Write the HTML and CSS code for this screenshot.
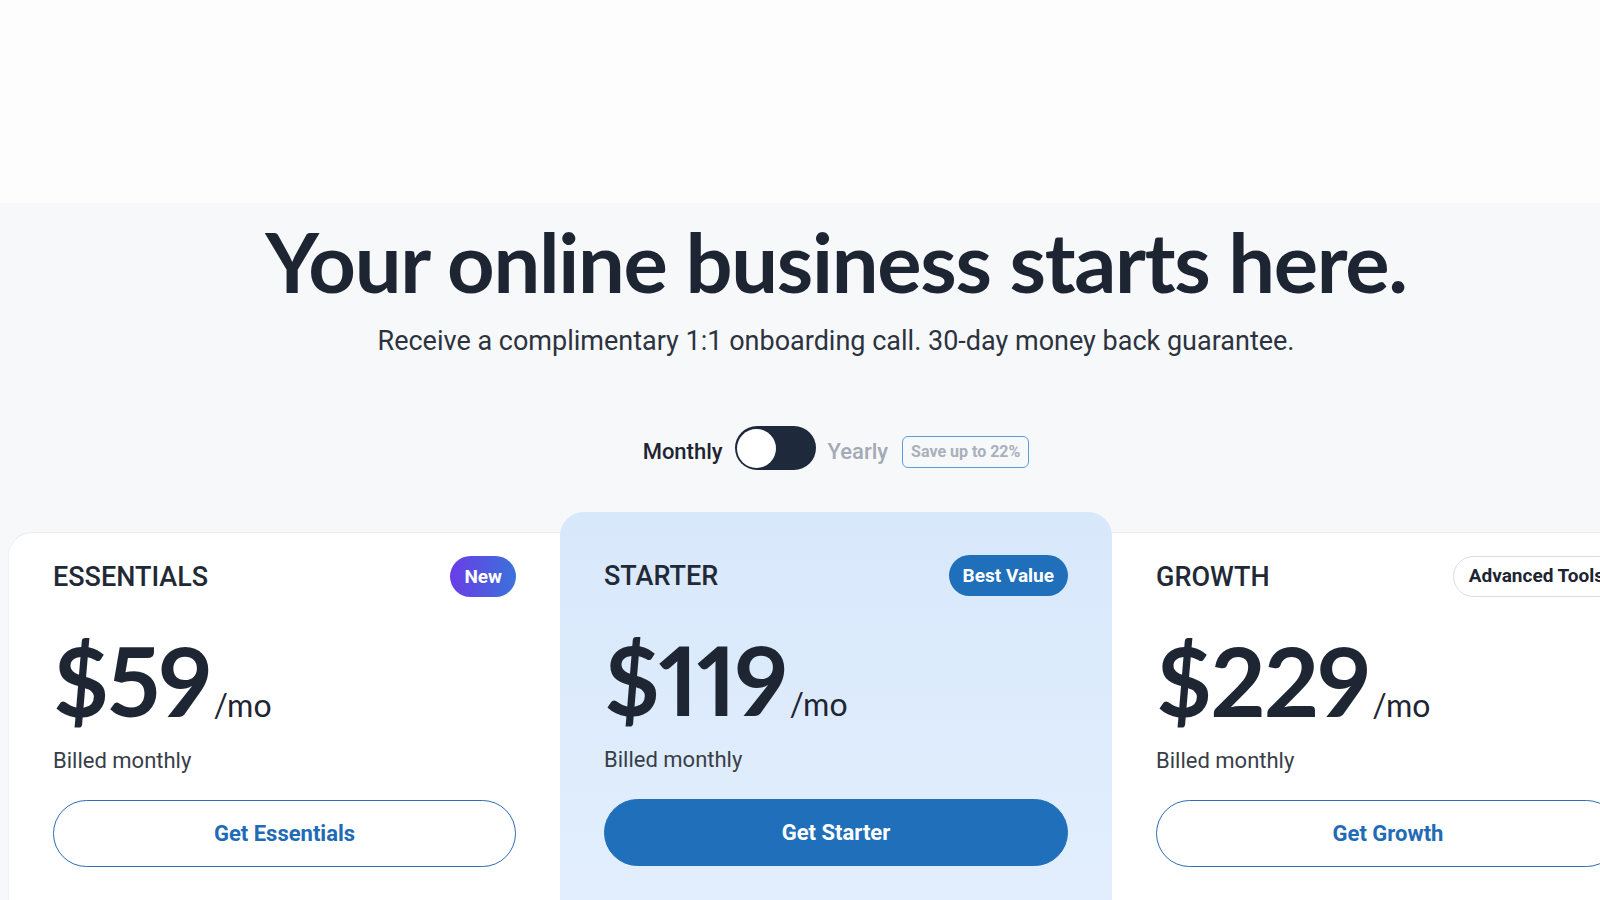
FILE: index.html
```html
<!DOCTYPE html>
<html lang="en">
<head>
<meta charset="utf-8">
<title>Pricing</title>
<link rel="stylesheet" href="styles.css">
</head>
<body>
<div class="page">
  <div class="topband"></div>
  <section class="hero">
    <h1 class="title">Your online business starts here.</h1>
    <p class="subtitle">Receive a complimentary 1:1 onboarding call. 30-day money back guarantee.</p>
    <div class="billing">
      <span class="billing-label billing-label--active">Monthly</span>
      <span class="switch"><span class="knob"></span></span>
      <span class="billing-label">Yearly</span>
      <span class="save">Save up to 22%</span>
    </div>
    <div class="plans">
      <article class="plan plan--first">
        <div class="plan-head">
          <h2 class="plan-name">ESSENTIALS</h2>
          <span class="tag tag--new">New</span>
        </div>
        <div class="price"><span class="amount">$59</span><span class="per">/mo</span></div>
        <p class="billed">Billed monthly</p>
        <a class="cta">Get Essentials</a>
      </article>
      <article class="plan plan--featured">
        <div class="plan-head">
          <h2 class="plan-name">STARTER</h2>
          <span class="tag tag--best">Best Value</span>
        </div>
        <div class="price"><span class="amount">$119</span><span class="per">/mo</span></div>
        <p class="billed">Billed monthly</p>
        <a class="cta cta--solid">Get Starter</a>
      </article>
      <article class="plan plan--last">
        <div class="plan-head">
          <h2 class="plan-name">GROWTH</h2>
          <span class="tag tag--outline">Advanced Tools</span>
        </div>
        <div class="price"><span class="amount">$229</span><span class="per">/mo</span></div>
        <p class="billed">Billed monthly</p>
        <a class="cta">Get Growth</a>
      </article>
    </div>
  </section>
</div>
</body>
</html>
```

FILE: styles.css
```css
html, body {
  margin: 0;
  padding: 0;
  overflow: hidden;
  background: #f7f8fa;
}

.page {
  width: 1672px;
}

.topband {
  height: 203px;
  background: #fdfdfd;
}

.hero {
  background: #f7f8fa;
  padding-top: 8px;
  display: flex;
  flex-direction: column;
  align-items: center;
}

.title {
  margin: 0;
  font-family: "Lato", "Liberation Sans", sans-serif;
  font-weight: 700;
  font-size: 83px;
  line-height: 100px;
  color: #1e2532;
  letter-spacing: -1.3px;
}

.subtitle {
  margin: 15px 0 0;
  font-family: "Roboto", "Liberation Sans", sans-serif;
  font-weight: 400;
  font-size: 27px;
  line-height: 30px;
  color: #2c333f;
}

.billing {
  margin-top: 70px;
  display: flex;
  align-items: center;
  height: 44px;
}

.billing-label {
  font-family: "Roboto", "Liberation Sans", sans-serif;
  font-weight: 500;
  font-size: 22px;
  line-height: 26px;
  color: #a3aab6;
  margin-top: 8px;
}

.billing-label--active {
  color: #1e2532;
  margin-right: 12px;
}

.switch {
  width: 81px;
  height: 44px;
  box-sizing: border-box;
  padding: 2px;
  border-radius: 22px;
  background: #1e293b;
  display: flex;
  align-items: center;
  margin-right: 12px;
}

.knob {
  width: 39px;
  height: 39px;
  border-radius: 50%;
  background: #ffffff;
}

.save {
  margin-left: 14px;
  margin-top: 8px;
  box-sizing: border-box;
  height: 32px;
  padding: 0 8px;
  border: 1.5px solid #5d9cd8;
  border-radius: 6px;
  font-family: "Roboto", "Liberation Sans", sans-serif;
  font-weight: 700;
  font-size: 16px;
  line-height: 29px;
  color: #a9b0bb;
}

.plans {
  margin-top: 42px;
  align-self: stretch;
  display: flex;
  align-items: flex-start;
  padding: 0 8px;
}

.plan {
  flex: none;
  width: 552px;
  box-sizing: border-box;
  margin-top: 20px;
  padding: 23px 44px 80px;
  background: #ffffff;
  border-top: 1px solid #e9edf2;
}

.plan--first {
  border-radius: 24px 0 0 0;
  border-left: 1px solid #eef1f5;
}

.plan--featured {
  margin-top: 0;
  padding-top: 43px;
  border-top: none;
  border-radius: 24px 24px 0 0;
  background: linear-gradient(180deg, #d8e8fb 0%, #e3effd 100%);
  position: relative;
  z-index: 1;
}

.plan--last {
  border-radius: 0 24px 0 0;
}

.plan-head {
  display: flex;
  align-items: center;
  justify-content: space-between;
  height: 41px;
}

.plan-name {
  margin: 0;
  font-family: "Roboto", "Liberation Sans", sans-serif;
  font-weight: 500;
  font-size: 27px;
  line-height: 32px;
  color: #222936;
}

.tag {
  box-sizing: border-box;
  height: 41px;
  padding: 0 14px;
  border-radius: 999px;
  font-family: "Roboto", "Liberation Sans", sans-serif;
  font-weight: 700;
  font-size: 19px;
  line-height: 41px;
  white-space: nowrap;
}

.tag--new {
  color: #ffffff;
  background: linear-gradient(90deg, #6b3ce6 0%, #3a72da 100%);
}

.tag--best {
  color: #ffffff;
  background: #1f6fba;
}

.tag--outline {
  color: #1e2532;
  background: #ffffff;
  border: 1.5px solid #d9dde3;
  line-height: 38px;
  padding: 0 15px;
}

.price {
  margin-top: 35px;
  display: flex;
  align-items: baseline;
  height: 96px;
  color: #1e2533;
}

.amount {
  font-family: "Lato", "Liberation Sans", sans-serif;
  font-weight: 700;
  font-size: 96px;
  line-height: 96px;
  letter-spacing: -1.5px;
  font-variant-numeric: proportional-nums;
}

.per {
  margin-left: 3px;
  font-family: "Lato", "Liberation Sans", sans-serif;
  font-weight: 400;
  font-size: 32px;
}

.billed {
  margin: 20px 0 0;
  font-family: "Roboto", "Liberation Sans", sans-serif;
  font-weight: 400;
  font-size: 22px;
  line-height: 26px;
  color: #383e48;
}

.cta {
  margin-top: 26px;
  height: 67px;
  box-sizing: border-box;
  border: 1.5px solid #2e6db3;
  border-radius: 999px;
  display: flex;
  align-items: center;
  justify-content: center;
  font-family: "Roboto", "Liberation Sans", sans-serif;
  font-weight: 700;
  font-size: 22px;
  color: #1f6bb5;
  text-decoration: none;
}

.cta--solid {
  background: #1f6fba;
  border-color: #1f6fba;
  color: #ffffff;
}
```
